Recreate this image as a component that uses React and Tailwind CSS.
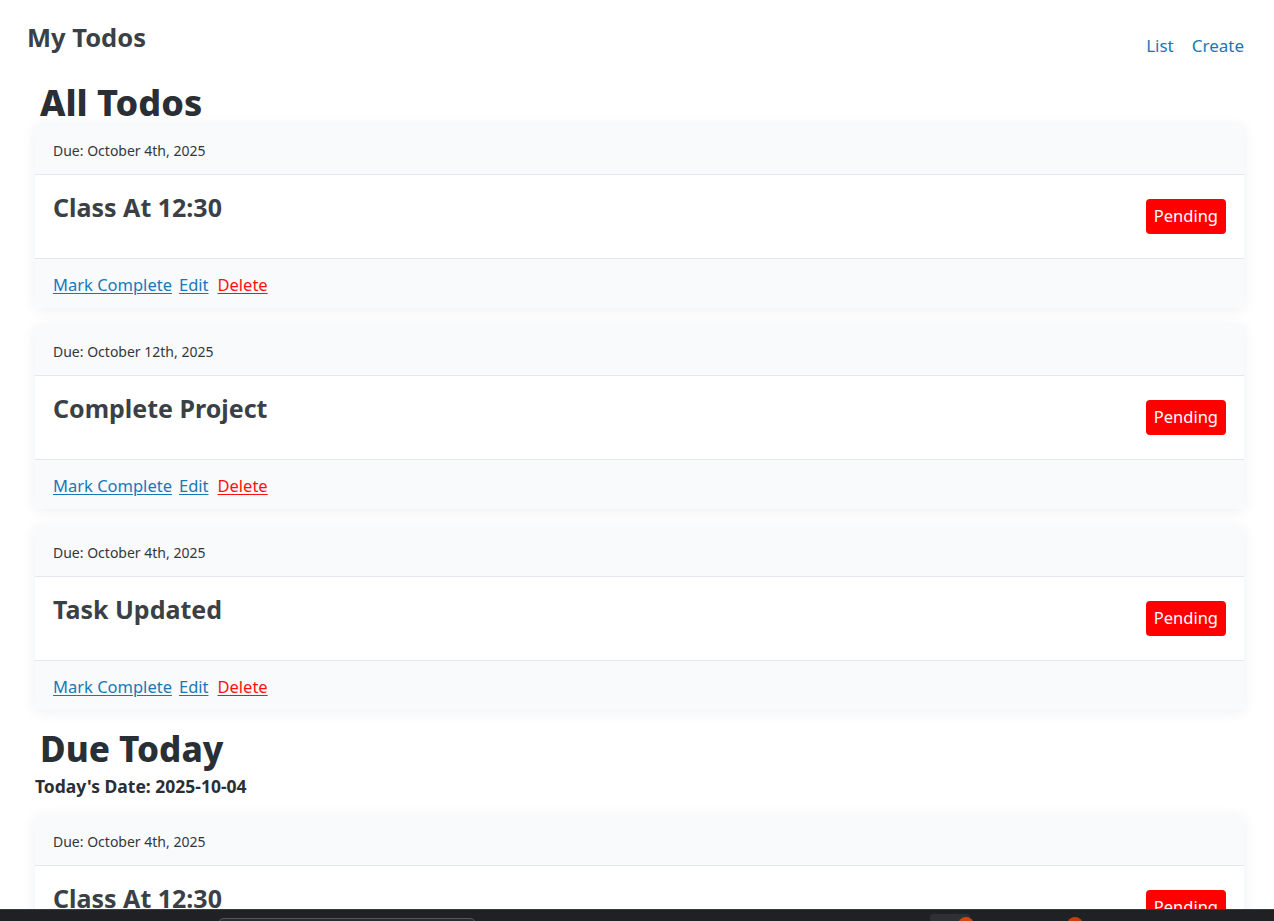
import React from "react";

const todos = [
  { due: "October 4th, 2025", title: "Class At 12:30" },
  { due: "October 12th, 2025", title: "Complete Project" },
  { due: "October 4th, 2025", title: "Task Updated" },
];

function TodoCard({ due, title }) {
  return (
    <div className="rounded-[5px] bg-white shadow-[0_2px_14px_rgba(30,40,90,0.07)] overflow-hidden">
      <div className="h-[51px] flex items-center pt-[2px] px-[18px] bg-[#f9fafb] border-b border-[#e4e7ee] text-[14px] text-[#33373d]">
        Due: {due}
      </div>
      <div className="h-[84px] flex justify-between items-start px-[18px] pt-[15px] border-b border-[#e4e7ee]">
        <h2 className="text-[25px] leading-[34px] font-bold text-[#3b3f46]">{title}</h2>
        <span className="mt-[9px] inline-flex items-center justify-center h-[35px] px-[8px] rounded-[4px] bg-[#ff0000] text-white text-[16.5px]">
          Pending
        </span>
      </div>
      <div className="h-[49px] flex items-center gap-[7px] pt-[3px] px-[18px] bg-[#f9fafb] text-[16.5px]">
        <a href="#" className="text-[#1877b7] underline underline-offset-2 decoration-1">Mark Complete</a>
        <a href="#" className="text-[#1877b7] underline underline-offset-2 decoration-1">Edit</a>
        <a href="#" className="ml-[2px] text-[#ff1010] underline underline-offset-2 decoration-1">Delete</a>
      </div>
    </div>
  );
}

export default function App() {
  return (
    <div className="min-h-[921px] bg-white font-['Noto_Sans','Open_Sans',sans-serif] relative overflow-hidden">
      <header className="flex justify-between pr-[30px] pl-[27px] pt-[21px] h-[70px]">
        <h1 className="text-[25.5px] leading-[32px] font-bold text-[#3b3f47]">My Todos</h1>
        <nav className="flex gap-[18px] mt-[12px] text-[17px] text-[#1877b7]">
          <a href="#">List</a>
          <a href="#">Create</a>
        </nav>
      </header>
      <main className="pl-[35px] pr-[30px] pb-[40px]">
        <h1 className="pl-[5px] mt-[12px] text-[36px] leading-[42px] font-extrabold text-[#2a2e35]">All Todos</h1>
        <div className="flex flex-col gap-[17px]">
          {todos.map((t, i) => (
            <TodoCard key={i} {...t} />
          ))}
        </div>
        <h1 className="pl-[5px] mt-[18px] text-[35px] leading-[42px] font-extrabold text-[#2a2e35]">Due Today</h1>
        <p className="mt-[4px] text-[17.5px] leading-[24px] font-bold text-[#2a2e35]">Today's Date: 2025-10-04</p>
        <div className="mt-[17px] flex flex-col gap-[17px]">
          <TodoCard due="October 4th, 2025" title="Class At 12:30" />
        </div>
      </main>
      <div className="fixed left-0 right-0 bottom-0 h-[12px] bg-[#202124] border-t border-[#3a3b3f]">
        <div className="absolute left-[218px] top-[8px] w-[258px] h-[10px] rounded-t-[6px] border border-[#55575c] bg-[#2a2b2f]"></div>
        <div className="absolute left-[930px] top-[4px] w-[40px] h-[10px] rounded-t-[4px] bg-[#2f3035]"></div>
        <div className="absolute left-[958px] top-[7px] w-[16px] h-[16px] rounded-full bg-[#d84315]"></div>
        <div className="absolute left-[1067px] top-[7px] w-[16px] h-[16px] rounded-full bg-[#c2410c]"></div>
      </div>
    </div>
  );
}
